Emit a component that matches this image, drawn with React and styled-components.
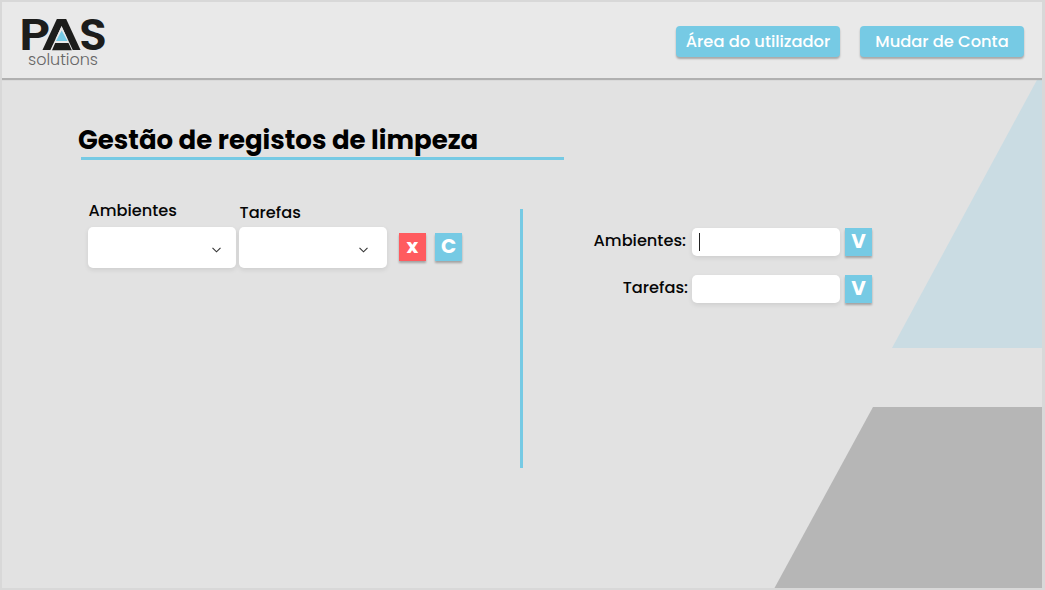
import React from "react";
import styled, { createGlobalStyle } from "styled-components";

const GlobalStyle = createGlobalStyle`
  *, *::before, *::after { box-sizing: border-box; }
  body {
    margin: 0;
    background: #d8d8d8;
    font-family: Poppins, Inter, "Open Sans", sans-serif;
    color: #060606;
  }
`;

const Page = styled.div`
  height: 590px;
  border: solid #d8d8d8;
  border-width: 2px 3px 2px 2px;
  background: #e2e2e2;
  position: relative;
  overflow: hidden;
  display: flex;
  flex-direction: column;
`;

const Backdrop = styled.svg`
  position: absolute;
  inset: 0;
  width: 1040px;
  height: 586px;
`;

const Header = styled.header`
  position: relative;
  flex: none;
  height: 76px;
  display: flex;
  justify-content: space-between;
  align-items: flex-start;
  padding: 0 18px 0 16px;
  background: #e9e9e9;
  box-shadow: 0 2px 1px #b0b0b0;
`;

const Logo = styled.svg`
  width: 96px;
  height: 70px;
  overflow: visible;
  font-family: Poppins, Inter, sans-serif;
`;

const Nav = styled.nav`
  display: flex;
  gap: 20px;
  padding-top: 24px;
`;

const NavButton = styled.button`
  width: 164px;
  height: 31px;
  padding: 0;
  border: 0;
  border-radius: 4px;
  background: #76cae4;
  color: #fff;
  font: 500 16.3px/31px Poppins, Inter, sans-serif;
  white-space: nowrap;
  box-shadow: 0 2px 2px rgba(0, 0, 0, 0.28);
`;

const Main = styled.main`
  position: relative;
  flex: 1;
  padding: 41px 0 0 76px;
`;

const TitleBlock = styled.div`
  width: 486px;
  height: 42px;
`;

const Title = styled.h1`
  margin: 0;
  height: 37px;
  font-size: 26px;
  line-height: 42px;
  font-weight: 700;
  white-space: nowrap;
  color: #000;
`;

const Rule = styled.div`
  height: 3px;
  margin: 1px 0 0 3px;
  background: #76cae4;
`;

const Columns = styled.div`
  display: flex;
  align-items: flex-start;
  padding: 48px 0 0 10px;
`;

const Filters = styled.section`
  width: 432px;
  display: flex;
`;

const SelectGroup = styled.div`
  width: 148px;
  margin-right: 3px;
`;

const Label = styled.label`
  display: block;
  height: 18px;
  padding: ${(p) => p.$drop || 0}px 0 0 0.5px;
  font-size: 16.2px;
  line-height: 4px;
  font-weight: 500;
  white-space: nowrap;
`;

const SelectBox = styled.div`
  height: 41px;
  border-radius: 5px;
  background: #fff;
  display: flex;
  align-items: center;
  justify-content: flex-end;
  padding: 4px ${(p) => p.$inset}px 0 0;
  box-shadow: 0 2px 5px rgba(0, 0, 0, 0.09);
`;

const SquareButton = styled.button`
  flex: none;
  width: 27px;
  height: 28px;
  padding: 0 0 1px;
  border: 0;
  background: ${(p) => (p.$danger ? "#ff5b5f" : "#76cae4")};
  color: #fff;
  font: 700 20px/27px Poppins, Inter, sans-serif;
  box-shadow: 0 2px 2px rgba(0, 0, 0, 0.28);
`;

const Actions = styled.div`
  display: flex;
  gap: 9px;
  padding: 24px 0 0 9px;
`;

const Divider = styled.div`
  width: 3px;
  height: 259px;
  background: #76cae4;
`;

const Form = styled.section`
  padding: 19px 0 0 60px;
  display: flex;
  flex-direction: column;
  gap: 18px;
`;

const Field = styled.div`
  display: flex;
  width: 289px;
  height: 29px;
`;

const FieldLabel = styled.label`
  width: 109px;
  padding-right: ${(p) => p.$inset}px;
  text-align: right;
  font-size: 16.2px;
  line-height: 25px;
  font-weight: 500;
  white-space: nowrap;
`;

const Input = styled.div`
  width: 148px;
  height: 28px;
  margin-right: 5px;
  padding: 5px 0 0 7px;
  border-radius: 5px;
  background: #fff;
  box-shadow: 0 2px 5px rgba(0, 0, 0, 0.09);
`;

const Caret = styled.div`
  width: 1px;
  height: 18px;
  background: #222;
`;

const Chevron = () => (
  <svg width="9" height="6" viewBox="0 0 9 6" fill="none">
    <path d="M.5.8 4.5 4.8 8.5.8" stroke="#333" strokeWidth="1.1" />
  </svg>
);

function PasLogo() {
  return (
    <Logo viewBox="18 2 96 70">
      <g fontSize="44" fontWeight="600" fill="#1d1d1b">
        <text x="19" y="50" textLength="31" lengthAdjust="spacingAndGlyphs">P</text>
        <text x="41" y="50" textLength="41" lengthAdjust="spacingAndGlyphs">A</text>
        <text x="79" y="50" textLength="28" lengthAdjust="spacingAndGlyphs">S</text>
      </g>
      <path d="M61.6 26 73 50.6H50.2Z" fill="#e9e9e9" />
      <path d="M61.7 30.5 67.5 41H56Z" fill="#76cae4" />
      <path d="M55.2 43H68.5L71.8 50.2H52Z" fill="#1d1d1b" />
      <text x="28" y="65" fontSize="15.5" fontWeight="300" fill="#666" textLength="70" lengthAdjust="spacingAndGlyphs">solutions</text>
    </Logo>
  );
}

export default function App() {
  return (
    <>
      <GlobalStyle />
      <Page>
        <Backdrop viewBox="2 2 1040 586">
          <path d="M1037.5 79H1042V348H892Z" fill="#cadce3" />
          <path d="M873 407H1042V588H774.5Z" fill="#b6b6b6" />
        </Backdrop>
        <Header>
          <PasLogo />
          <Nav>
            <NavButton>Área do utilizador</NavButton>
            <NavButton>Mudar de Conta</NavButton>
          </Nav>
        </Header>
        <Main>
          <TitleBlock>
            <Title>Gestão de registos de limpeza</Title>
            <Rule />
          </TitleBlock>
          <Columns>
            <Filters>
              <SelectGroup>
                <Label>Ambientes</Label>
                <SelectBox $inset={15}><Chevron /></SelectBox>
              </SelectGroup>
              <SelectGroup>
                <Label $drop={2}>Tarefas</Label>
                <SelectBox $inset={19}><Chevron /></SelectBox>
              </SelectGroup>
              <Actions>
                <SquareButton $danger>x</SquareButton>
                <SquareButton>C</SquareButton>
              </Actions>
            </Filters>
            <Divider />
            <Form>
              <Field>
                <FieldLabel $inset={6}>Ambientes:</FieldLabel>
                <Input><Caret /></Input>
                <SquareButton>V</SquareButton>
              </Field>
              <Field>
                <FieldLabel $inset={4}>Tarefas:</FieldLabel>
                <Input />
                <SquareButton>V</SquareButton>
              </Field>
            </Form>
          </Columns>
        </Main>
      </Page>
    </>
  );
}
